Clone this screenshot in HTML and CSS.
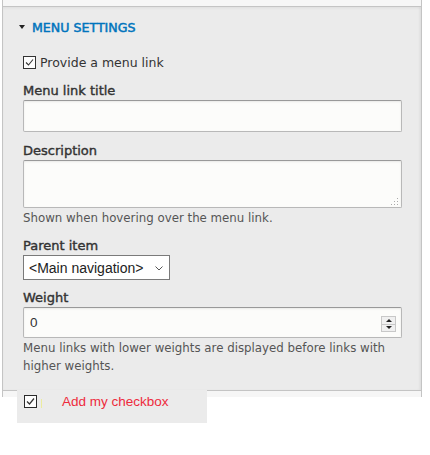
FILE: index.html
```html
<!DOCTYPE html>
<html lang="en">
<head>
    <meta charset="UTF-8">
    <meta name="viewport" content="width=device-width, initial-scale=1.0">
    <title>Menu settings</title>
    <link rel="stylesheet" href="styles.css">
</head>
<body>

<div class="sidebar">
    <div class="prev-panel"></div>

    <div class="panel">
        <div class="panel-title">
            <span class="arrow"></span>
            <span class="title-text">MENU SETTINGS</span>
        </div>

        <label class="check-row">
            <span class="checkbox">
                <svg width="11" height="11" viewBox="0 0 11 11"><path d="M2 5.5 L4.5 8 L9 2.5" fill="none" stroke="#333" stroke-width="1.1"/></svg>
            </span>
            <span>Provide a menu link</span>
        </label>

        <div class="form-item first">
            <div class="label">Menu link title</div>
            <input type="text" class="text-input">
        </div>

        <div class="form-item">
            <div class="label">Description</div>
            <div class="area-wrap">
                <textarea class="text-area"></textarea>
                <svg class="grip" width="8" height="8" viewBox="0 0 8 8">
                    <rect x="6" y="0" width="1" height="1" fill="#aaa"/>
                    <rect x="3" y="3" width="1" height="1" fill="#aaa"/>
                    <rect x="6" y="3" width="1" height="1" fill="#aaa"/>
                    <rect x="0" y="6" width="1" height="1" fill="#aaa"/>
                    <rect x="3" y="6" width="1" height="1" fill="#aaa"/>
                    <rect x="6" y="6" width="1" height="1" fill="#aaa"/>
                </svg>
            </div>
            <div class="help">Shown when hovering over the menu link.</div>
        </div>

        <div class="form-item">
            <div class="label">Parent item</div>
            <div class="select-wrap">
                <select class="select">
                    <option>&lt;Main navigation&gt;</option>
                </select>
                <svg class="chevron" width="8" height="5" viewBox="0 0 8 5"><path d="M0.5 0.5 L4 4 L7.5 0.5" fill="none" stroke="#555" stroke-width="1"/></svg>
            </div>
        </div>

        <div class="form-item weight-item">
            <div class="label">Weight</div>
            <div class="number-wrap">
                <input type="text" class="text-input weight" value="0">
                <span class="spin">
                    <span class="spin-up"></span>
                    <span class="spin-down"></span>
                </span>
            </div>
            <div class="help wide">Menu links with lower weights are displayed before links with higher weights.</div>
        </div>
    </div>

    <div class="next-panel"></div>
</div>

<div class="my-checkbox">
    <span class="checkbox dark">
        <svg width="11" height="11" viewBox="0 0 11 11"><path d="M2 5.5 L4.5 8 L9 2.5" fill="none" stroke="#333" stroke-width="1.2"/></svg>
    </span>
    <span class="caret"></span>
    <span class="my-label">Add my checkbox</span>
</div>

</body>
</html>
```

FILE: styles.css
```css
html,
body {
    min-height: 100vh;
}
body {
    margin: 0;
    background-color: white;
    font-family: "DejaVu Sans", sans-serif;
    color: #333;
    position: relative;
}
.sidebar {
    margin-left: 2px;
    width: 418px;
    border-left: 1px solid #c4c4c4;
    border-right: 1px solid #c4c4c4;
}
.prev-panel {
    height: 6px;
    background-color: #f6f6f6;
    border-bottom: 1px solid #c4c4c4;
}
.next-panel {
    height: 6px;
    background-color: #f6f6f6;
}
.panel {
    background-color: #ebebeb;
    border-bottom: 1px solid #c4c4c4;
    box-shadow: inset -2px 0 2px rgba(0, 0, 0, 0.04), inset 0 2px 2px rgba(0, 0, 0, 0.03);
    padding: 12px 19px 15px 20px;
}
.panel-title {
    display: flex;
    align-items: center;
    height: 16px;
}
.arrow {
    width: 0;
    height: 0;
    border-left: 3.5px solid transparent;
    border-right: 3.5px solid transparent;
    border-top: 4px solid #222;
    margin-left: -4px;
    margin-right: 7px;
}
.title-text {
    color: #0074bd;
    font-size: 12.6px;
    -webkit-text-stroke: 0.5px #0074bd;
}
.check-row {
    display: flex;
    align-items: center;
    height: 18px;
    margin-top: 18px;
    font-size: 12.5px;
    color: #333;
}
.checkbox {
    width: 11px;
    height: 11px;
    border: 1px solid #333;
    background-color: #fdfdfd;
    margin-right: 4px;
    display: flex;
}
.label {
    font-size: 13px;
    line-height: 16px;
    height: 16px;
    -webkit-text-stroke: 0.4px #333;
    margin-bottom: 1px;
}
.form-item {
    margin-top: 11px;
}
.form-item.first {
    margin-top: 12px;
}
.form-item.weight-item {
    margin-top: 10px;
}
.text-input,
.text-area {
    display: block;
    box-sizing: border-box;
    width: 379px;
    height: 32px;
    margin: 0;
    border: 1px solid #b8b8b8;
    border-top-color: #999;
    border-radius: 2px;
    background-color: #fcfcfa;
    box-shadow: inset 0 1px 2px rgba(0, 0, 0, 0.08);
    font-family: "Liberation Sans", sans-serif;
    font-size: 13px;
    color: #333;
    padding: 0 6px;
}
.text-area {
    height: 48px;
    resize: none;
}
.area-wrap,
.number-wrap,
.select-wrap {
    position: relative;
}
.grip {
    position: absolute;
    left: 368px;
    top: 38px;
}
.help {
    font-size: 11.8px;
    line-height: 17px;
    color: #555;
    margin-top: 2px;
}
.help.wide {
    line-height: 18px;
    margin-top: 1px;
}
.select-wrap {
    width: 147px;
}
.select {
    appearance: none;
    -webkit-appearance: none;
    box-sizing: border-box;
    width: 147px;
    height: 25px;
    border: 1px solid #7a7a7a;
    border-radius: 0;
    background-color: white;
    font-family: "Liberation Sans", sans-serif;
    font-size: 14px;
    color: #222;
    padding: 0 0 0 5px;
    margin: 0;
    display: block;
}
.chevron {
    position: absolute;
    right: 7px;
    top: 11px;
}
.weight {
    height: 31px;
    padding-left: 6px;
    font-size: 13.5px;
    margin-top: 1px;
}
.spin {
    position: absolute;
    left: 358px;
    top: 9px;
    width: 13px;
    height: 14px;
    display: flex;
    flex-direction: column;
    border: 1px solid #c8c8c8;
    background-color: #f0f0f0;
}
.spin-up,
.spin-down {
    flex: 1;
    display: flex;
    align-items: center;
    justify-content: center;
}
.spin-up {
    border-bottom: 1px solid #c8c8c8;
}
.spin-up::after {
    content: "";
    border-left: 3px solid transparent;
    border-right: 3px solid transparent;
    border-bottom: 3px solid #222;
}
.spin-down::after {
    content: "";
    border-left: 3px solid transparent;
    border-right: 3px solid transparent;
    border-top: 3px solid #222;
}
.my-checkbox {
    position: absolute;
    left: 17px;
    top: 390px;
    width: 190px;
    height: 33px;
    background-color: #ebebeb;
    display: flex;
    align-items: flex-start;
    padding: 5px 0 0 7px;
    box-sizing: border-box;
}
.checkbox.dark {
    border-color: #2a2a2a;
    margin-right: 0;
}
.caret {
    width: 1px;
    height: 9px;
    background-color: #ecec9e;
    margin: 4px 0 0 4px;
}
.my-label {
    font-family: "Liberation Sans", sans-serif;
    font-size: 13.5px;
    color: #ee2a3c;
    margin-left: 20px;
    line-height: 13px;
    padding-top: 0;
}
```
